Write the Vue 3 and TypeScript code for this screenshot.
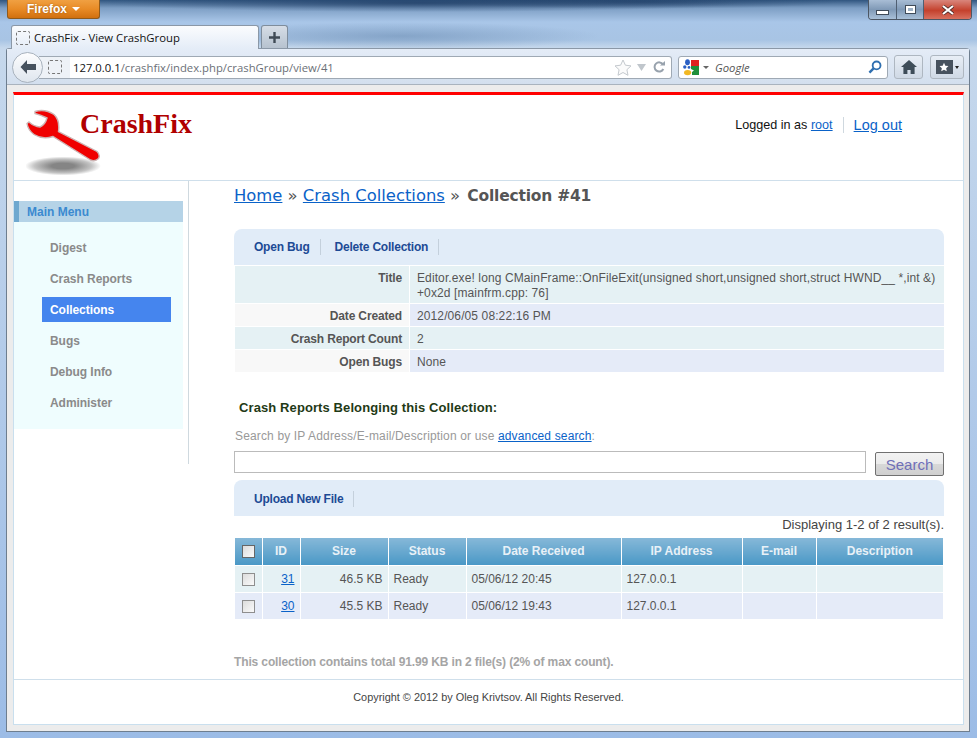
<script setup lang="ts">
const menu = [
  { label: 'Digest', active: false },
  { label: 'Crash Reports', active: false },
  { label: 'Collections', active: true },
  { label: 'Bugs', active: false },
  { label: 'Debug Info', active: false },
  { label: 'Administer', active: false },
]
const details = [
  { k: 'Title', v: 'Editor.exe! long CMainFrame::OnFileExit(unsigned short,unsigned short,struct HWND__ *,int &)\n+0x2d [mainfrm.cpp: 76]', tall: true },
  { k: 'Date Created', v: '2012/06/05 08:22:16 PM', tall: false },
  { k: 'Crash Report Count', v: '2', tall: false },
  { k: 'Open Bugs', v: 'None', tall: false },
]
const rows = [
  { id: '31', size: '46.5 KB', date: '05/06/12 20:45' },
  { id: '30', size: '45.5 KB', date: '05/06/12 19:43' },
]
</script>

<template>
  <div class="window">
    <div class="titlebar">
      <div class="ff-btn">Firefox <span class="ff-caret"></span></div>
      <div class="controls">
        <div class="ctl"><span class="min"></span></div>
        <div class="ctl mid"><span class="max"></span></div>
        <div class="ctl close">
          <svg width="14" height="10" viewBox="0 0 14 10"><path d="M2 1l10 8M12 1L2 9" stroke="#4a2a28" stroke-width="3.6" fill="none"/><path d="M2 1l10 8M12 1L2 9" stroke="#fff" stroke-width="2.2" fill="none"/></svg>
        </div>
      </div>
    </div>
    <div class="tabrow">
      <div class="tab"><span class="fav"></span><span>CrashFix - View CrashGroup</span></div>
      <div class="newtab">
        <svg width="11" height="11" viewBox="0 0 11 11"><path d="M5.5 0v11M0 5.5h11" stroke="#3f4a55" stroke-width="2.4"/></svg>
      </div>
    </div>
    <div class="frame">
      <div class="toolbar">
        <div class="back">
          <svg width="18" height="16" viewBox="0 0 18 16"><path d="M8 1L1.5 8 8 15v-4h9V5H8z" fill="#47525e"/></svg>
        </div>
        <div class="urlbar">
          <div class="urlfav"><span class="fav"></span></div>
          <div class="url"><span class="host">127.0.0.1</span>/crashfix/index.php/crashGroup/view/41</div>
          <svg class="star" width="18" height="17" viewBox="0 0 18 17"><path d="M9 1l2.4 5.2 5.6.7-4.1 3.8 1.1 5.6L9 13.5l-5 2.8 1.1-5.6L1 6.9l5.6-.7z" fill="#fbfbfb" stroke="#c4c9ce"/></svg>
          <svg class="drop" width="9" height="7" viewBox="0 0 9 7"><path d="M0 0h9L4.5 7z" fill="#c0c6cc"/></svg>
          <svg class="reload" width="12" height="12" viewBox="0 0 12 12"><path d="M10 3.4A4.6 4.6 0 1 0 10.3 8" stroke="#98a2ad" stroke-width="2" fill="none"/><path d="M7 4.5h5V0z" fill="#98a2ad"/></svg>
        </div>
        <div class="searchbar">
          <svg width="16" height="17" viewBox="0 0 16 17">
            <rect x="8" y="1" width="8" height="6" fill="#e02020"/>
            <path d="M8 7h8v9H9v-3l2-1.5L8 10z" fill="#1f8f3a"/>
            <ellipse cx="4.5" cy="3.2" rx="2.4" ry="3" fill="#2a5fc4"/>
            <circle cx="1.8" cy="8" r="1.7" fill="#2a5fc4"/>
            <circle cx="6" cy="8.4" r="1.4" fill="#2a5fc4"/>
            <ellipse cx="4.6" cy="13.6" rx="3.6" ry="2.6" fill="#f2b822"/>
          </svg>
          <span class="s-caret"></span>
          <span class="s-text">Google</span>
          <svg class="mag" width="14" height="14" viewBox="0 0 15 15"><circle cx="9.2" cy="5.8" r="4.2" stroke="#2f6fb0" stroke-width="2" fill="none"/><path d="M6 9L1.5 13.5" stroke="#2f6fb0" stroke-width="2.6"/></svg>
        </div>
        <div class="toolbtn home">
          <svg width="16" height="14" viewBox="0 0 16 14"><path d="M8 0L0 7h2.4v7h4v-4h3.2v4h4V7H16z" fill="#3e4d59"/></svg>
        </div>
        <div class="toolbtn books">
          <span class="bookicon">
            <svg width="10" height="10" viewBox="0 0 18 17"><path d="M9 1l2.4 5.2 5.6.7-4.1 3.8 1.1 5.6L9 13.5l-5 2.8 1.1-5.6L1 6.9l5.6-.7z" fill="#fff"/></svg>
          </span>
          <span class="b-caret"></span>
        </div>
      </div>

      <div class="page-outer">
        <div class="page">
          <header class="header">
            <div class="logo">
              <svg class="wrench" width="76" height="68" viewBox="26 108 76 68">
                <defs>
                  <radialGradient id="sh"><stop offset="0.3" stop-color="#858585"/><stop offset="0.75" stop-color="#c4c4c4"/><stop offset="1" stop-color="#fff"/></radialGradient>
                </defs>
                <ellipse cx="63" cy="166" rx="38" ry="9.5" fill="url(#sh)"/>
                <path d="M35 111.5Q45 108.500 54 114.500Q60 120 58.500 131.500L97 151.500Q100.500 155 98.500 158.500Q95 162 90.500 160L53 136.500Q43 140 34 134.500Q28 130 27 123.500L29 122Q34 126.500 40 127Q45 125 47 118Q41 115 35 113.500Z" fill="#f00000" stroke="#cdb4b4" stroke-width="1.4"/>
              </svg>
              <span class="logotext">CrashFix</span>
            </div>
            <div class="userbox">
              <span class="logged">Logged in as <a class="link">root</a></span>
              <a class="link logout">Log out</a>
            </div>
          </header>

          <div class="main">
            <aside class="sidebar">
              <div class="sidepanel">
                <div class="menutitle">Main Menu</div>
                <ul class="menu">
                  <li v-for="m in menu" :key="m.label" :class="{ active: m.active }"><span>{{ m.label }}</span></li>
                </ul>
              </div>
            </aside>

            <section class="content">
              <div class="crumbs"><a class="link">Home</a> » <a class="link">Crash Collections</a> » <b>Collection #41</b></div>

              <div class="actions first">
                <a class="act">Open Bug</a>
                <a class="act">Delete Collection</a>
              </div>
              <div class="detail">
                <div v-for="d in details" :key="d.k" class="drow" :class="{ tall: d.tall }">
                  <div class="dk">{{ d.k }}</div>
                  <div class="dv">{{ d.v }}</div>
                </div>
              </div>

              <h3 class="subhead">Crash Reports Belonging this Collection:</h3>
              <div class="hint">Search by IP Address/E-mail/Description or use <a class="link">advanced search</a>:</div>
              <div class="searchrow">
                <input class="sinput" type="text" />
                <button class="sbtn" type="button">Search</button>
              </div>
              <div class="actions second">
                <a class="act">Upload New File</a>
              </div>
              <div class="summary">Displaying 1-2 of 2 result(s).</div>
              <table class="grid">
                <colgroup>
                  <col class="w1" /><col class="w2" /><col class="w3" /><col class="w4" /><col class="w5" /><col class="w6" /><col class="w7" /><col />
                </colgroup>
                <thead>
                  <tr>
                    <th><span class="cb head"></span></th>
                    <th>ID</th><th>Size</th><th>Status</th><th>Date Received</th><th>IP Address</th><th>E-mail</th><th>Description</th>
                  </tr>
                </thead>
                <tbody>
                  <tr v-for="(r, i) in rows" :key="r.id" :class="i % 2 ? 'even' : 'odd'">
                    <td class="c"><span class="cb"></span></td>
                    <td class="r"><a class="link">{{ r.id }}</a></td>
                    <td class="r">{{ r.size }}</td>
                    <td>Ready</td>
                    <td>{{ r.date }}</td>
                    <td>127.0.0.1</td>
                    <td></td>
                    <td></td>
                  </tr>
                </tbody>
              </table>
              <div class="total">This collection contains total 91.99 KB in 2 file(s) (2% of max count).</div>
            </section>
          </div>

          <footer class="footer">Copyright © 2012 by Oleg Krivtsov. All Rights Reserved.</footer>
        </div>
      </div>
    </div>
  </div>
</template>

<style>
html, body { margin: 0; padding: 0; overflow: hidden; }
</style>

<style scoped>
.window {
  width: 977px; height: 738px; overflow: hidden; box-sizing: border-box;
  font-family: "Liberation Sans", Arial, sans-serif; font-size: 12px; color: #444;
  background:
    radial-gradient(ellipse 320px 9px at 420px 3px, rgba(30,60,100,.75), rgba(30,60,100,0)),
    radial-gradient(ellipse 200px 7px at 640px 2px, rgba(30,60,100,.6), rgba(30,60,100,0)),
    radial-gradient(ellipse 200px 14px at 400px 36px, rgba(90,125,165,.45), rgba(90,125,165,0)),
    linear-gradient(180deg, #30557f 0, #7d9ec4 8px, #a9c6e8 22px, #a8c4e4 40px, #c6d8ec 48px, #9cbce6 100%);
  display: flex; flex-direction: column;
}
.titlebar { height: 25px; flex: none; display: flex; justify-content: space-between; padding: 0 5px 0 7px; box-sizing: border-box; }
.ff-btn {
  width: 93px; height: 19px; box-sizing: border-box; border: 1px solid #8f5a1c; border-top: 0;
  border-radius: 0 0 3px 3px; background: linear-gradient(180deg, #f0a042 0, #e88b26 50%, #d1700f 100%);
  color: #fff; font-weight: bold; font-size: 12px; display: flex; align-items: center; justify-content: center; gap: 5px;
  text-shadow: 0 0 2px #9a5408;
}
.ff-caret { width: 0; height: 0; border: 4px solid transparent; border-top: 4px solid #fff; border-bottom: 0; }
.controls { display: flex; height: 19px; border: 1px solid #4c5663; border-top: 0; border-radius: 0 0 4px 4px; overflow: hidden; }
.ctl { width: 28px; box-sizing: border-box; display: flex; align-items: center; justify-content: center; background: linear-gradient(180deg, #a8bdd5, #7f99b6 50%, #a9c0d8); border-right: 1px solid #4f5f72; }
.ctl.mid { width: 27px; }
.ctl.close { width: 47px; border: 0; background: linear-gradient(180deg, #d9867c, #c4412d 55%, #d8705f); }
.min { width: 11px; height: 3px; margin-top: 6px; background: #fff; border: 1px solid #404b58; }
.max { width: 5px; height: 3px; background: #9fb2c6; border: 2px solid #fff; outline: 1px solid #404b58; }
.tabrow { height: 24px; margin-bottom: -1px; position: relative; z-index: 1; flex: none; display: flex; padding-left: 11px; gap: 2px; align-items: flex-start; }
.tab {
  width: 248px; height: 24px; box-sizing: border-box; border: 1px solid #8b98a7; border-bottom: 0;
  border-radius: 3px 3px 0 0; background: linear-gradient(180deg, #fbfcfe, #e4ecf7);
  display: flex; align-items: center; gap: 4px; padding-left: 4px; color: #111; font-size: 11.3px;
  font-family: "Open Sans", "Liberation Sans", sans-serif;
}
.fav { width: 14px; height: 14px; box-sizing: border-box; border: 1px dashed #777; border-radius: 2px; display: block; flex: none; }
.newtab {
  width: 27px; height: 23px; box-sizing: border-box; border: 1px solid #7f8d9c; border-bottom: 0; border-radius: 3px 3px 0 0;
  background: linear-gradient(180deg, #d6dde6, #b6c2cf); display: flex; align-items: center; justify-content: center;
}
.frame {
  flex: none; width: 964px; margin-left: 6px; height: 684px; box-sizing: border-box;
  border: 1px solid #6e7e8f; border-top: 1px solid #8b98a7; border-radius: 3px 4px 0 0; background: #ececec;
  display: flex; flex-direction: column;
}
.toolbar {
  height: 36px; flex: none; box-sizing: border-box; background: linear-gradient(180deg, #e4ecf7, #d3dfee);
  border-bottom: 1px solid #a9b3be; display: flex; align-items: center; padding: 1px 6px 0 5px;
}
.back {
  width: 31px; height: 31px; border-radius: 50%; box-sizing: border-box; border: 1px solid #a8b2bd;
  background: linear-gradient(180deg, #fdfdfe, #dfe6ee); display: flex; align-items: center; justify-content: center;
  flex: none; position: relative; z-index: 1;
}
.urlbar {
  margin-left: -4px; width: 633px; height: 23px; flex: none; box-sizing: border-box; border: 1px solid #9fa9b4; border-left: 0;
  border-radius: 0 3px 3px 0; background: #fff; display: flex; align-items: center; padding-right: 6px;
}
.urlfav { width: 31px; height: 21px; box-sizing: border-box; background: #eef2f7; display: flex; align-items: center; padding-left: 9px; flex: none; }
.url { flex: 1; color: #6b7077; font-size: 11.3px; padding-left: 3px; font-family: "Open Sans", "Liberation Sans", sans-serif; white-space: nowrap; }
.host { color: #111; }
.star { margin-right: 5px; flex: none; }
.drop { margin-right: 7px; flex: none; }
.reload { flex: none; }
.searchbar {
  margin-left: 6px; width: 210px; height: 23px; flex: none; box-sizing: border-box; border: 1px solid #9fa9b4; border-radius: 3px;
  background: #fff; display: flex; align-items: center; padding: 0 5px 0 4px;
}
.s-caret { width: 0; height: 0; border: 3px solid transparent; border-top: 3px solid #666; border-bottom: 0; margin-left: 4px; }
.s-text { flex: 1; font-style: italic; color: #555; font-size: 11.3px; padding-left: 6px; font-family: "Open Sans", sans-serif; }
.toolbtn {
  height: 24px; box-sizing: border-box; border: 1px solid #aeb7c1; border-radius: 3px; background: linear-gradient(180deg, #e8eef6, #cfd9e5);
  display: flex; align-items: center; justify-content: center; flex: none;
}
.home { width: 29px; margin-left: 6px; }
.books { width: 34px; margin-left: 7px; gap: 2px; }
.bookicon { width: 17px; height: 14px; background: #47525e; display: flex; align-items: center; justify-content: center; }
.b-caret { width: 0; height: 0; border: 2px solid transparent; border-top: 3px solid #222; border-bottom: 0; }
.page-outer { flex: 1; padding: 7px 5px 6px 6px; min-height: 0; display: flex; }
.page {
  flex: 1; background: #fff; box-sizing: border-box; border: 1px solid #c9dfee; border-top: 3px solid #f00;
  display: flex; flex-direction: column; min-height: 0; width: 100%;
}
.header { height: 86px; flex: none; box-sizing: border-box; border-bottom: 1px solid #cfdfeb; display: flex; justify-content: space-between; }
.logo { display: flex; align-items: flex-start; padding: 13px 0 0 12px; }
.wrench { flex: none; }
.logotext {
  font-family: "Liberation Serif", serif; font-weight: bold; font-size: 28px; line-height: 32px; color: #b00000; margin-left: -22px;
}
.userbox { display: flex; align-items: center; padding: 0 61px 26px 0; }
.logged { font-size: 12.6px; color: #111; padding-right: 10px; border-right: 1px solid #cfd8df; height: 16px; line-height: 16px; }
.link { color: #0a62c8; text-decoration: underline; }
.logout { font-size: 14.5px; margin-left: 10px; }
.main { flex: 1; display: flex; min-height: 0; }
.sidebar { width: 174px; height: 283px; flex: none; border-right: 1px solid #cfd9df; }
.sidepanel { margin-top: 20px; width: 169px; height: 228px; background: #effdfe; }
.menutitle {
  height: 21px; line-height: 23px; box-sizing: border-box; background: #b5d3e7; border-left: 5px solid #6fa8cf;
  padding-left: 8px; color: #3b8ad0; font-weight: bold; font-size: 12px;
}
.menu { list-style: none; margin: 0; padding: 13px 12px 0 28px; }
.menu li { height: 25px; line-height: 27px; margin-bottom: 6px; padding-left: 8px; color: #8a8a8a; font-weight: bold; font-size: 12px; letter-spacing: -0.05px; }
.menu li.active { background: #4585ee; color: #fff; }
.content { flex: 1; padding: 0 19px 0 45px; min-width: 0; }
.crumbs { font-family: "DejaVu Sans", Verdana, sans-serif; font-size: 16.4px; line-height: 20px; padding-top: 5px; color: #555; height: 43px; white-space: nowrap; box-sizing: content-box; }
.crumbs b { color: #555; font-size: 15.5px; letter-spacing: -0.2px; margin-left: 2px; }
.actions { background: #e1ecf8; border-radius: 8px 8px 0 0; height: 36px; display: flex; align-items: center; padding-left: 20px; box-sizing: border-box; }
.act { color: #1d4a95; font-weight: bold; font-size: 12px; letter-spacing: -0.22px; padding-right: 10px; margin-right: 14px; border-right: 1px solid #c4d0dc; line-height: 16px; }
.detail { padding: 1px 0 0 1px; }
.drow { display: flex; height: 23px; }
.drow.tall { height: 38px; }
.dk { width: 174px; margin-right: 1px; box-sizing: border-box; text-align: right; padding: 5px 7px 0 0; font-weight: bold; color: #555; letter-spacing: -0.15px; border-bottom: 1px solid #fff; line-height: 15px; }
.dv { flex: 1; box-sizing: border-box; padding: 5px 6px 0 7px; color: #555; white-space: pre-line; line-height: 15px; letter-spacing: 0.11px; border-bottom: 1px solid #fff; }
.drow:nth-child(odd) .dk, .drow:nth-child(odd) .dv { background: #e5f1f4; }
.drow:nth-child(even) .dk { background: #f8f8f8; }
.drow:nth-child(even) .dv { background: #e5ebf8; }
.drow:last-child .dk { background: #f8f8f8; }
.drow:last-child .dv { background: #e5ebf8; }
.subhead { margin: 27px 0 0 5px; font-size: 13px; line-height: 15px; color: #1f3a16; font-weight: bold; letter-spacing: 0.1px; }
.hint { margin: 14px 0 0 1px; color: #999; line-height: 15px; font-size: 12px; letter-spacing: 0.15px; }
.searchrow { display: flex; margin-top: 7px; justify-content: space-between; align-items: flex-start; }
.sinput { width: 632px; height: 22px; box-sizing: border-box; border: 1px solid #bbb; margin: 0; padding: 0; background: #fff; }
.sbtn {
  width: 69px; height: 24px; margin: 1px 0 0 0; box-sizing: border-box; border: 1px solid #707070; border-radius: 2px;
  background: linear-gradient(180deg, #f2f2f2 0, #ebebeb 50%, #d8d8d8 51%, #cfcfcf 100%); color: #6f6fb8; font-size: 15px; padding: 0;
  font-family: "Liberation Sans", sans-serif;
}
.second { margin-top: 4px; padding-top: 2px; }
.summary { text-align: right; line-height: 18px; font-size: 13px; color: #444; }
.grid { width: 708px; margin: 4px 0 0 1px; border-collapse: collapse; table-layout: fixed; }
.w1 { width: 27px; } .w2 { width: 38px; } .w3 { width: 88px; } .w4 { width: 78px; } .w5 { width: 155px; } .w6 { width: 121px; } .w7 { width: 74px; }
.grid th {
  height: 27px; box-sizing: border-box; padding: 0; color: #e8f1f7; font-weight: bold; font-size: 12px; border-left: 1px solid #fff; border-bottom: 1px solid #fff;
  background: linear-gradient(180deg, #86b8d8, #4a98c6);
}
.grid td { height: 27px; padding: 0 5px; font-size: 12px; color: #555; border-left: 1px solid #fff; border-bottom: 1px solid #fff; box-sizing: border-box; }
.grid th:first-child, .grid td:first-child { border-left: 0; }
.odd td { background: #e5f1f4; }
.even td { background: #e5ebf8; }
.r { text-align: right; }
.c { text-align: center; }
.cb { display: inline-block; vertical-align: middle; width: 13px; height: 13px; box-sizing: border-box; border: 1px solid #8e8e8e; background: linear-gradient(135deg, #dcdcdc, #fafafa); }
.cb.head { border-color: #666; }
.total { margin-top: 35px; color: #a5a5a5; font-weight: bold; font-size: 12px; line-height: 14px; letter-spacing: -0.13px; }
.footer { height: 45px; flex: none; box-sizing: border-box; border-top: 1px solid #cfdfeb; text-align: center; font-size: 10.9px; color: #444; padding-top: 11px; line-height: 13px; margin-top: auto; }
</style>
